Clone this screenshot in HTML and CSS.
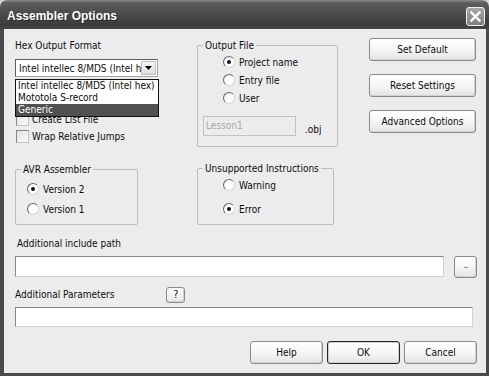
FILE: index.html
```html
<!DOCTYPE html>
<html lang="en">
  <head>
    <meta charset="UTF-8" />
    <title>Assembler Options</title>
    <link rel="stylesheet" href="styles.css">
  </head>
  <body>
    <div class="window">
      <div class="titlebar">
        <span class="title">Assembler Options</span>
        <span class="close">
          <svg width="11" height="11" viewBox="0 0 11 11">
            <path d="M1.5 1.5 L9.5 9.5 M9.5 1.5 L1.5 9.5" stroke="#fff" stroke-width="2.4" stroke-linecap="square" fill="none"/>
          </svg>
        </span>
      </div>
      <div class="frame">
        <div class="top">
          <div class="col-left">
            <div class="label">Hex Output Format</div>
            <div class="combo-wrap">
              <div class="combo">
                <span class="combo-text">Intel intellec 8/MDS (Intel h</span>
                <span class="combo-btn">
                  <svg width="7" height="4" viewBox="0 0 7 4"><path d="M0 0 H7 L3.5 4 Z" fill="#000"/></svg>
                </span>
              </div>
              <ul class="dropdown">
                <li>Intel intellec 8/MDS (Intel hex)</li>
                <li>Mototola S-record</li>
                <li class="selected">Generic</li>
              </ul>
            </div>
            <div class="check first"><i></i>Create List File</div>
            <div class="check"><i></i>Wrap Relative Jumps</div>
            <fieldset class="group avr">
              <legend>AVR Assembler</legend>
              <div class="radio on"><i></i>Version 2</div>
              <div class="radio"><i></i>Version 1</div>
            </fieldset>
          </div>
          <div class="col-mid">
            <fieldset class="group output">
              <legend>Output File</legend>
              <div class="radio on"><i></i>Project name</div>
              <div class="radio"><i></i>Entry file</div>
              <div class="radio"><i></i>User</div>
              <div class="file-row">
                <div class="textbox disabled">Lesson1</div>
                <span class="ext">.obj</span>
              </div>
            </fieldset>
            <fieldset class="group unsupported">
              <legend>Unsupported Instructions</legend>
              <div class="radio"><i></i>Warning</div>
              <div class="radio on"><i></i>Error</div>
            </fieldset>
          </div>
          <div class="col-right">
            <button class="btn side">Set Default</button>
            <button class="btn side">Reset Settings</button>
            <button class="btn side">Advanced Options</button>
          </div>
        </div>

        <div class="label include">Additional include path</div>
        <div class="path-row">
          <div class="textbox path"></div>
          <button class="btn browse">...</button>
        </div>

        <div class="params-row">
          <span class="label">Additional Parameters</span>
          <button class="btn help-q">?</button>
        </div>
        <div class="textbox params"></div>

        <div class="footer">
          <button class="btn action">Help</button>
          <button class="btn action default">OK</button>
          <button class="btn action">Cancel</button>
        </div>
      </div>
    </div>
  </body>
</html>
```
FILE: styles.css
```css
* {
  margin: 0;
  padding: 0;
  box-sizing: border-box;
}
html,
body {
  background: #d6d6d6;
}
body {
  font-family: "DejaVu Sans Condensed", "Liberation Sans", sans-serif;
  font-size: 10px;
  color: #0c0c0c;
}
.window {
  width: 489px;
  height: 376px;
  display: flex;
  flex-direction: column;
}
.titlebar {
  height: 29px;
  flex: none;
  display: flex;
  justify-content: space-between;
  align-items: flex-start;
  padding: 0 4px 0 7px;
  border-radius: 7px 7px 0 0;
  background: linear-gradient(to bottom, #8a8a8a 0, #5c5c5c 3px, #4c4c4c 45%, #3b3b3b 85%, #474747 100%);
}
.title {
  font-family: "Liberation Sans", sans-serif;
  font-weight: bold;
  font-size: 12px;
  color: #fff;
  margin-top: 9px;
  text-shadow: 1px 1px 0 #2a2a2a;
}
.close {
  width: 19px;
  height: 19px;
  margin-top: 7px;
  display: flex;
  align-items: center;
  justify-content: center;
  border: 1px solid #f2f2f2;
  border-radius: 3px;
  background: linear-gradient(to bottom, #a8a8a8, #7e7e7e);
}
.frame {
  flex: 1;
  background: #ececec;
  border: solid #4a4a4a;
  border-width: 0 3px 3px 4px;
  padding: 10px 9px 0 11px;
}
.label {
  line-height: 13px;
  white-space: nowrap;
}
.top {
  display: flex;
  align-items: flex-start;
}
.col-left {
  width: 182px;
}
.col-mid {
  width: 172px;
}
.col-right {
  width: 107px;
  margin-top: -1px;
  display: flex;
  flex-direction: column;
  gap: 13px;
}

/* combo box with its open list */
.combo-wrap {
  position: relative;
  width: 143px;
  margin-top: 7px;
}
.combo {
  height: 18px;
  display: flex;
  align-items: center;
  background: #fff;
  border: 1px solid;
  border-color: #5e5e5e #a4a4a4 #a4a4a4 #5e5e5e;
  padding: 1px;
}
.combo-text {
  flex: 1;
  white-space: nowrap;
  padding-left: 2px;
}
.combo-btn {
  width: 15px;
  height: 14px;
  flex: none;
  display: flex;
  align-items: center;
  justify-content: center;
  background: linear-gradient(to bottom, #f6f6f6, #dedede);
  border: 1px solid #bdbdbd;
  border-radius: 1px;
}
.dropdown {
  position: absolute;
  left: 0;
  top: 20px;
  width: 144px;
  list-style: none;
  background: #fff;
  border: 1px solid #111;
}
.dropdown li {
  line-height: 12px;
  padding-left: 2px;
  white-space: nowrap;
}
.dropdown li.selected {
  background: #505050;
  color: #fff;
}

/* check boxes */
.check {
  display: flex;
  align-items: center;
  height: 17px;
  margin-left: 1px;
}
.check.first {
  margin-top: 34px;
}
.check i {
  width: 13px;
  height: 13px;
  margin-right: 3px;
  border: 1px solid;
  border-color: #858585 #c4c4c4 #c4c4c4 #858585;
  background: linear-gradient(135deg, #e2e2e2, #fafafa);
}

/* group boxes */
.group {
  border: 1px solid #bdbdbd;
  border-radius: 2px;
}
.group legend {
  line-height: 13px;
  margin-left: 5px;
  padding: 0 2px;
  white-space: nowrap;
}
.avr {
  width: 123px;
  margin-top: 18px;
  padding: 3px 0 5px 0;
}
.avr .radio {
  height: 20px;
  margin-left: 11px;
}
.output {
  width: 141px;
  padding: 1px 0 10px 0;
}
.output .radio {
  margin-left: 25px;
}
.unsupported {
  width: 137px;
  margin-top: 15px;
  padding: 1px 0 6px 0;
}
.unsupported .radio {
  margin-left: 25px;
}
.unsupported .radio + .radio {
  margin-top: 6px;
}

/* radio buttons */
.radio {
  display: flex;
  align-items: center;
  height: 18px;
}
.radio i {
  position: relative;
  width: 12px;
  height: 12px;
  margin-right: 4px;
  border-radius: 50%;
  border: 1px solid;
  border-color: #6a6a6a #d6d6d6 #d6d6d6 #6a6a6a;
  background: radial-gradient(circle at 65% 65%, #fff 50%, #e0e0e0 100%);
}
.radio.on i::after {
  content: "";
  position: absolute;
  left: 3px;
  top: 3px;
  width: 4px;
  height: 4px;
  border-radius: 50%;
  background: #111;
}

/* text boxes */
.textbox {
  height: 21px;
  background: #fff;
  border: 1px solid;
  border-color: #8a8a8a #d2d2d2 #d2d2d2 #8a8a8a;
}
.file-row {
  display: flex;
  align-items: flex-start;
  margin: 9px 0 0 5px;
}
.textbox.disabled {
  width: 93px;
  height: 20px;
  background: #ececec;
  border-color: #c2c2c2;
  color: #aaa;
  line-height: 18px;
  padding-left: 2px;
}
.ext {
  margin: 7px 0 0 9px;
  line-height: 13px;
}
.include {
  margin-top: 12px;
  padding-left: 2px;
}
.path-row {
  display: flex;
  align-items: flex-start;
  margin-top: 6px;
}
.textbox.path {
  flex: 1;
}
.params-row {
  display: flex;
  align-items: center;
  height: 17px;
  margin-top: 8px;
}
.textbox.params {
  width: 458px;
  height: 20px;
  margin-top: 4px;
}

/* buttons */
.btn {
  font: inherit;
  color: #0c0c0c;
  border: 1px solid #8a8a8a;
  border-radius: 3px;
  background: linear-gradient(to bottom, #ffffff 0, #f4f4f4 55%, #e4e4e4 100%);
  box-shadow: inset -1px -1px 0 #d2d2d2;
}
.btn.side {
  height: 23px;
}
.btn.browse {
  width: 23px;
  height: 22px;
  margin-left: 10px;
  color: #555;
  font-size: 9px;
  line-height: 14px;
  padding-bottom: 4px;
  letter-spacing: -1px;
}
.btn.help-q {
  width: 19px;
  height: 16px;
  margin-left: 52px;
  line-height: 12px;
}
.footer {
  display: flex;
  justify-content: flex-end;
  gap: 4px;
  margin-top: 14px;
}
.btn.action {
  width: 73px;
  height: 23px;
}
.btn.default {
  border-color: #262626;
  box-shadow: inset 0 0 0 1px #cfcfcf;
}
```
